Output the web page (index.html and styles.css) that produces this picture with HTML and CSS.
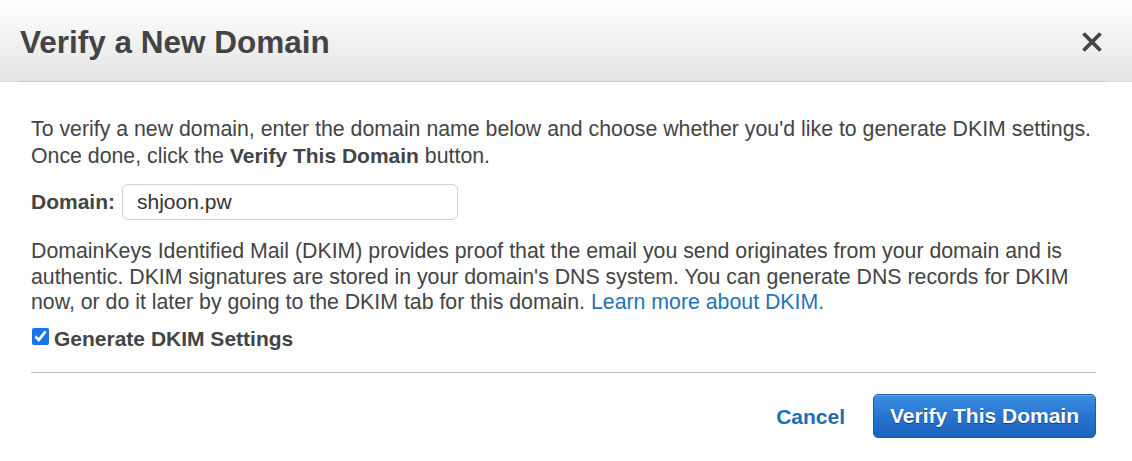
FILE: index.html
```html
<!DOCTYPE html>
<html lang="en">
<head>
<meta charset="utf-8">
<title>Verify a New Domain</title>
<link rel="stylesheet" href="styles.css">
</head>
<body>
<div class="dialog">
  <header class="dialog-header">
    <h1 class="dialog-title">Verify a New Domain</h1>
    <button class="close-btn" type="button" aria-label="Close">
      <svg width="22" height="22" viewBox="0 0 22 22" aria-hidden="true">
        <path d="M2.5 2.5 L19.5 19.5 M19.5 2.5 L2.5 19.5" stroke="#444" stroke-width="3.8" stroke-linecap="butt" fill="none"/>
      </svg>
    </button>
  </header>
  <main class="dialog-body">
    <p class="intro">To verify a new domain, enter the domain name below and choose whether you'd like to generate DKIM settings. Once done, click the <b>Verify This Domain</b> button.</p>
    <div class="domain-row">
      <label class="domain-label" for="domain">Domain:</label>
      <input class="domain-input" id="domain" type="text" value="shjoon.pw">
    </div>
    <p class="dkim-text">DomainKeys Identified Mail (DKIM) provides proof that the email you send originates from your domain and is authentic. DKIM signatures are stored in your domain's DNS system. You can generate DNS records for DKIM now, or do it later by going to the DKIM tab for this domain. <a class="link" href="#">Learn more about DKIM.</a></p>
    <label class="check-row">
      <input class="check" type="checkbox" checked>
      <span class="check-label">Generate DKIM Settings</span>
    </label>
    <div class="separator"></div>
    <div class="footer">
      <a class="cancel" href="#">Cancel</a>
      <button class="primary-btn" type="button">Verify This Domain</button>
    </div>
  </main>
</div>
</body>
</html>
```
FILE: styles.css
```css
* { box-sizing: border-box; }

html, body {
  margin: 0;
  padding: 0;
  background: #fff;
}

body {
  font-family: "Liberation Sans", Arial, sans-serif;
  font-size: 21px;
  line-height: 25.5px;
  color: #444;
}

.dialog {
  width: 1132px;
  min-height: 461px;
}

.dialog-header {
  height: 82px;
  display: flex;
  align-items: center;
  justify-content: space-between;
  padding: 0 29px 0 20px;
  background:
    linear-gradient(#c9c9c9, #c9c9c9) 20px 81px / 1086px 1px no-repeat,
    linear-gradient(#dcdcdc, #dcdcdc) 0 81px / 100% 1px no-repeat,
    linear-gradient(to bottom, #ffffff 0%, #e4e4e4 81px);
}

.dialog-title {
  margin: 0;
  font-size: 31.5px;
  line-height: 82px;
  height: 81px;
  font-weight: bold;
  color: #444;
}

.close-btn {
  border: 0;
  background: transparent;
  padding: 0;
  width: 22px;
  height: 22px;
  margin-top: 2px;
  display: flex;
  cursor: pointer;
}

.dialog-body {
  padding: 35px 36px 0 31px;
}

.intro,
.dkim-text {
  margin: 0;
  font-size: 21.3px;
}

.intro b {
  font-size: 21px;
}

.domain-row {
  display: flex;
  align-items: center;
  margin-top: 15px;
  height: 36px;
}

.domain-label {
  font-weight: bold;
  margin-right: 7px;
}

.domain-input {
  width: 336px;
  height: 36px;
  border: 1px solid #cfcfcf;
  border-radius: 6px;
  padding: 0 14px;
  font-family: "Liberation Sans", Arial, sans-serif;
  font-size: 21px;
  color: #333;
  background: #fff;
  outline: none;
}

.dkim-text {
  margin-top: 19px;
}

.link {
  color: #2473bb;
  text-decoration: none;
}

.check-row {
  display: flex;
  align-items: flex-start;
  margin-top: 10.5px;
  height: 25.5px;
}

.check {
  width: 17px;
  height: 17px;
  margin: 2px 5px 0 1px;
  accent-color: #1a73e8;
}

.check-label {
  font-weight: bold;
}

.separator {
  margin-top: 20.5px;
  height: 1px;
  background: #bdbdbd;
}

.footer {
  display: flex;
  justify-content: flex-end;
  align-items: center;
  margin-top: 21px;
}

.cancel {
  font-weight: bold;
  color: #1f6db3;
  text-decoration: none;
  margin-right: 28px;
  margin-top: 2px;
}

.primary-btn {
  height: 44px;
  width: 223px;
  padding: 0;
  border: 1px solid #1b5ba8;
  border-radius: 5px;
  background: linear-gradient(to bottom, #3c8ee2 0%, #2673cf 55%, #1c64bd 100%);
  box-shadow: inset 0 1px 0 rgba(255, 255, 255, 0.25);
  color: #fff;
  font-family: "Liberation Sans", Arial, sans-serif;
  font-size: 21px;
  font-weight: bold;
  line-height: 42px;
  text-shadow: 0 1px 1px rgba(0, 0, 0, 0.45);
  cursor: pointer;
}
```
